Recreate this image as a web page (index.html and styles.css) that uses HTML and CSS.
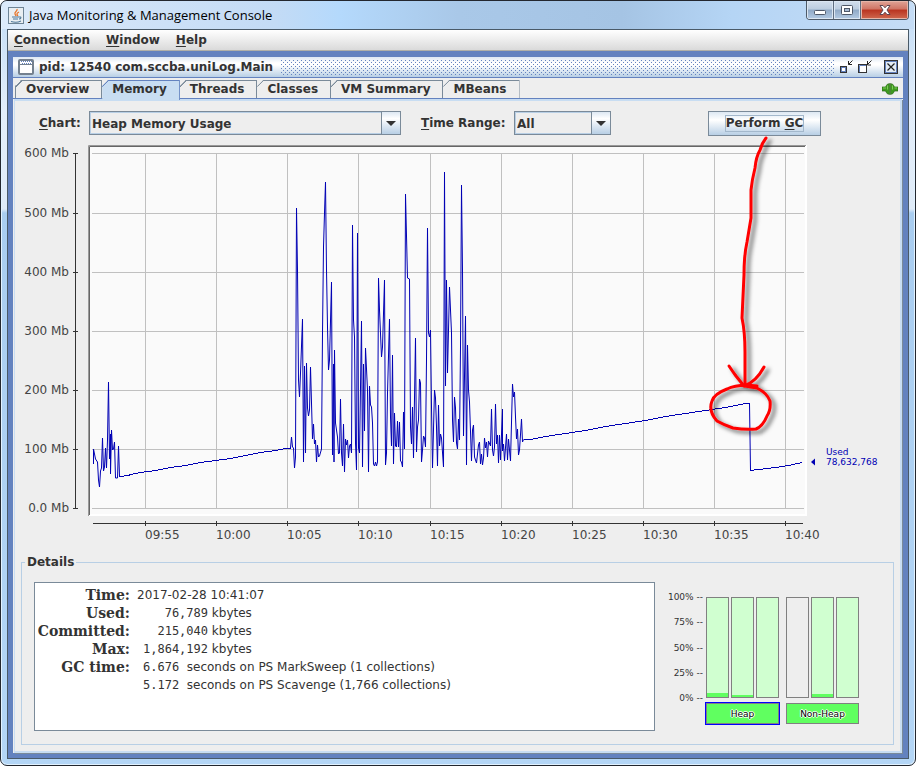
FILE: index.html
```
<!DOCTYPE html>
<html lang="en">

<head>
    <meta charset="UTF-8">
    <meta name="viewport" content="width=device-width, initial-scale=1.0">
    <title>Java Monitoring &amp; Management Console</title>
    <link rel="stylesheet" href="styles.css">
</head>

<body>
    <div class="window">
        <header class="titlebar">
            <svg class="java-icon" width="16" height="17" viewBox="0 0 16 17">
                <rect x="0.5" y="0.5" width="15" height="16" fill="#e9eef2" stroke="#6e8496" />
                <path d="M9 2c1 2-3 3-2 5l1 2M11 5c-2 1-3 2-1 4" fill="none" stroke="#e8762c" stroke-width="1.3" />
                <path d="M4 10h7M5 12h5M3 14.500c3 1 7 1 10-.5M11 10c3-.5 2 2 0 2" fill="none" stroke="#4f7899" stroke-width="1.1" />
            </svg>
            <h1>Java Monitoring &amp; Management Console</h1>
            <div class="window-buttons">
                <button type="button" class="win-btn" aria-label="Minimize">
                    <svg width="14" height="12" viewBox="0 0 14 12"><rect x="1.500" y="6.500" width="11" height="4" rx="1" fill="#fff" stroke="#4f5868" /></svg>
                </button>
                <button type="button" class="win-btn" aria-label="Maximize">
                    <svg width="14" height="12" viewBox="0 0 14 12"><rect x="1.500" y="1.500" width="11" height="9" rx="1" fill="#fff" stroke="#4f5868" /><rect x="4.500" y="4.500" width="5" height="3" fill="#a9bcd4" stroke="#4f5868" /></svg>
                </button>
                <button type="button" class="win-btn win-close" aria-label="Close">
                    <svg width="14" height="12" viewBox="0 0 14 12"><path d="M2 1.500h3l2 2.300 2-2.300h3L9 6l3 4.500H9L7 8.200 5 10.500H2L5 6z" fill="#fff" stroke="#5d4650" /></svg>
                </button>
            </div>
        </header>

        <div class="client">
            <nav class="menubar">
                <a href="#"><u>C</u>onnection</a>
                <a href="#"><u>W</u>indow</a>
                <a href="#"><u>H</u>elp</a>
            </nav>

            <main class="desktop">
                <section class="frame">
                    <div class="frame-title">
                        <svg width="16" height="16" viewBox="0 0 16 16">
                            <rect x="1" y="1" width="14" height="14" rx="1" fill="#fff" stroke="#74818f" stroke-width="2" />
                            <path d="M2 5.500h12" stroke="#74818f" />
                            <path d="M3 2.500h11M4 4.500h10" stroke="#6382bf" stroke-dasharray="1 1" />
                        </svg>
                        <h2>pid: 12540 com.sccba.uniLog.Main</h2>
                        <span class="bumps"></span>
                        <button type="button" class="frame-btn" aria-label="Iconify">
                            <svg width="14" height="16" viewBox="0 0 14 16">
                                <rect x="1.500" y="7.500" width="6" height="6" fill="#fff" stroke="#333" />
                                <rect x="2.500" y="8.500" width="4" height="4" fill="none" stroke="#6382bf" />
                                <path d="M13.500 1.500l-4 4M9.500 2v3.500H13" fill="none" stroke="#222" />
                            </svg>
                        </button>
                        <button type="button" class="frame-btn" aria-label="Maximize frame">
                            <svg width="15" height="16" viewBox="0 0 15 16">
                                <rect x="1.500" y="5.500" width="8" height="8" fill="#fff" stroke="#333" />
                                <path d="M2.500 13V6.500H9" fill="none" stroke="#6382bf" />
                                <path d="M14.500 1.500l-4 4M10.500 2v4H14" fill="none" stroke="#222" />
                            </svg>
                        </button>
                        <button type="button" class="frame-btn" aria-label="Close frame">
                            <svg width="14" height="16" viewBox="0 0 14 16">
                                <rect x="0.500" y="1.500" width="13" height="13" fill="#e4edf6" stroke="#333" />
                                <rect x="1.500" y="2.500" width="11" height="11" fill="none" stroke="#6382bf" />
                                <path d="M3.500 4.500l7 7M10.500 4.500l-7 7" stroke="#222" stroke-width="1.200" />
                            </svg>
                        </button>
                    </div>

                    <div class="tabs">
                        <button type="button" class="tab tab-first">Overview</button>
                        <button type="button" class="tab active">Memory</button>
                        <button type="button" class="tab">Threads</button>
                        <button type="button" class="tab">Classes</button>
                        <button type="button" class="tab">VM Summary</button>
                        <button type="button" class="tab">MBeans</button>
                        <svg class="plug" width="16" height="12" viewBox="0 0 16 12">
                            <path d="M0 4h3.500L5 1.500 7.500.5v11L5 10.500 3.500 8H0z" fill="#3e9a1e" stroke="#2b6b16" stroke-width=".7" />
                            <path d="M16 4h-3.500L11 1.500 8.500.5v11l2.500-1L12.500 8H16z" fill="#3e9a1e" stroke="#2b6b16" stroke-width=".7" />
                            <path d="M1 5h3M5.500 2.500v4M10.500 2.500v4M12.500 5H15" stroke="#7ecb5a" />
                        </svg>
                    </div>

                    <div class="panel">
                        <div class="toolbar">
                            <label class="chart-label" for="chart"><u>C</u>hart:</label>
                            <div class="combo combo-chart">
                                <select id="chart">
                                    <option>Heap Memory Usage</option>
                                    <option>Non-Heap Memory Usage</option>
                                </select>
                                <span class="combo-arrow"></span>
                            </div>
                            <label class="range-label" for="range"><u>T</u>ime Range:</label>
                            <div class="combo combo-range">
                                <select id="range">
                                    <option>All</option>
                                    <option>1 hour</option>
                                </select>
                                <span class="combo-arrow"></span>
                            </div>
                            <button type="button" class="gc-button"><span>Perform <u>G</u>C</span></button>
                        </div>

                        <svg class="plot" viewBox="15 136 885 412" role="img" aria-label="Heap memory usage over time">
                            <defs>
                                <filter id="shadow" x="-50%" y="-10%" width="220%" height="120%">
                                    <feDropShadow dx="4" dy="3" stdDeviation="2" flood-color="#000" flood-opacity="0.600" />
                                </filter>
                            </defs>

                            <rect x="88" y="145" width="719" height="371" fill="#fff" />
                            <rect x="90" y="147" width="715" height="367" fill="#fafafa" />
                            <path d="M88.500 516V145.500H806" fill="none" stroke="#999" />
                            <path d="M89.500 515V146.500H805" fill="none" stroke="#666" />

                            <path class="grid" d="M92 153.500H804M92 213.500H804M92 272.500H804M92 331.500H804M92 390.500H804M92 449.500H804M92 508.500H804" />
                            <path class="grid" d="M145.500 154V508M216.500 154V508M287.500 154V508M358.500 154V508M430.500 154V508M501.500 154V508M572.500 154V508M643.500 154V508M714.500 154V508M785.500 154V508" />

                            <path class="axis" d="M75.500 153V509M73 153.500h5M73 213.500h5M73 272.500h5M73 331.500h5M73 390.500h5M73 449.500h5M73 508.500h5" />
                            <path class="axis" d="M93 523.500H803M145.500 521v5M216.500 521v5M287.500 521v5M358.500 521v5M430.500 521v5M501.500 521v5M572.500 521v5M643.500 521v5M714.500 521v5M785.500 521v5" />

                            <g class="tick" text-anchor="end">
                                <text x="69" y="157">600 Mb</text>
                                <text x="69" y="217">500 Mb</text>
                                <text x="69" y="276">400 Mb</text>
                                <text x="69" y="335">300 Mb</text>
                                <text x="69" y="394">200 Mb</text>
                                <text x="69" y="453">100 Mb</text>
                                <text x="69" y="512">0.0 Mb</text>
                            </g>
                            <g class="tick">
                                <text x="145" y="539">09:55</text>
                                <text x="216" y="539">10:00</text>
                                <text x="287" y="539">10:05</text>
                                <text x="358" y="539">10:10</text>
                                <text x="430" y="539">10:15</text>
                                <text x="501" y="539">10:20</text>
                                <text x="572" y="539">10:25</text>
                                <text x="643" y="539">10:30</text>
                                <text x="714" y="539">10:35</text>
                                <text x="785" y="539">10:40</text>
                            </g>

                            <polyline class="series" points="93.5,464 93.5,449 95.5,459 97.5,462 98.5,480 99.5,487 100.5,471 101.5,468 102.5,438 103.5,471 104.5,467 105.5,448 106.5,468 107.5,440 108.5,382 109.5,459 110.5,434 110.5,474 111.5,430 112.5,450 113.5,449 114.5,442 115.5,478 117.5,478 118.5,446 119.5,476" />
                            <polyline class="series steps" points="119.5,476.500 128.5,475.500 130.5,474.500 140.5,472.500 155.5,470.500 170.5,467.500 185.5,465.500 200.5,462.500 215.5,460.500 230.5,458.500 245.5,455.500 260.5,452.500 275.5,450.500 285.5,448.500 290.5,448.500" />
                            <polyline class="series" points="290.5,448 291.5,437 292.5,447 293.5,448 294.5,468 295.5,457 296.5,208 297.5,270 298.5,380 299.5,397 300.5,373 302.5,319 303.5,462 304.5,366 305.5,453 306.5,363 307.5,408 308.5,416 309.5,410 310.5,367 312.5,439 313.5,424 314.5,444 315.5,440 316.5,462 317.5,445 318.5,457 319.5,456 321.5,449 322.5,333 323.5,247 324.5,213 325.5,182 326.5,270 327.5,327 328.5,370 329.5,360 331.5,282 332.5,455 333.5,364 334,462 334.5,350 335.5,423 337.5,437 338.5,454 339.5,453 340.5,399 341.5,453 342.5,466 343.5,424 344.5,472 345.5,439 346.5,445 347.5,440 348.5,458 349.5,446 350.5,444 351.5,453 352.5,225 353.5,320 354.5,337 355.5,443 356.5,470 357.5,233 358.5,448 359.5,453 361.5,321 362.5,467 363.5,364 364.5,431 365.5,348 367.5,390 368.5,472 369.5,386 370.5,405 371.5,407 372.5,423 373.5,464 374.5,466 375.5,462 376.5,466 377.5,462 378.5,278 379.5,310 381.5,357 382.5,347 384.5,280 385.5,465 386.5,453 387.5,393 389.5,319 390.5,417 391.5,446 392.5,355 393.5,464 394.5,413 395.5,446 396.5,447 397.5,421 398.5,447 399.5,422 400.5,461 401.5,462 402.5,467 403.5,412 404.5,449 405.5,194
                                407.5,278 409.5,279 410.5,427 411.5,444 412.5,407 413.5,458 415.5,338 416.5,452 417.5,427 418.5,420 419.5,379 420.5,383 421.5,462 422.5,450 423.5,436 424.5,438 425.5,447 426.5,360 427.5,228 428.5,333 429.5,337 430.5,330 431.5,407 432.5,468 434.5,390 435.5,398 436.5,427 437.5,466 438.5,405 439.5,446 440.5,434 441.5,438 443.5,467 444.5,172 445.5,386 446.5,280 447.5,373 449.5,287 451.5,333 452.5,420 453.5,442 454.5,397 455.5,408 456.5,443 457.5,449 458.5,419 459.5,440 460.5,347 461.5,185 462.5,270 463.5,436 465.5,316 466.5,465 467.5,345 468.5,390 469.5,402 471.5,461 472.5,430 473.5,425 474.5,457 476.5,463 478.5,445 479.5,442 480.5,464 481.5,454 482.5,465 483.5,458 484.5,438 485.5,448 486.5,442 487.5,457 488.5,441 490.5,446 491.5,409 492.5,450 493.5,456 494.5,447 495.5,404 496.5,444 497.5,435 498.5,463 499.5,435 500.5,460 502.5,409 502.5,451 503.5,444 504.5,461 506.5,434 507.5,460 508.5,439 510.5,461 512.5,384 513.5,397 514.5,392 515.5,417 516.5,439 517.5,429 518.5,455 519.5,450 521.5,419 522.5,442 523.5,439.500" />
                            <polyline class="series steps" points="523.5,439.500 530.5,439.500 545.5,436.500 565.5,433.500 585.5,430.500 605.5,426.500 625.5,423.500 645.5,420.500 665.5,416.500 685.5,413.500 705.5,410.500 725.5,407.500 745.5,403.500 749.5,403.500" />
                            <polyline class="series" points="749.5,403.500 750.5,470.500" />
                            <polyline class="series steps" points="750.5,470.500 758.5,469.500 775.5,467.500 788.5,465.500 802,462.500" />
                            <path d="M815 458.500v7l-4-3.500z" fill="#0000b4" />
                            <g class="used">
                                <text x="826" y="455">Used</text>
                                <text x="826" y="465">78,632,768</text>
                            </g>

                            <g class="marker" filter="url(#shadow)">
                                <path d="M766 138Q762 143 760 150Q756 157 755 168Q752 180 751 190V218L747 242Q744 255 744 275L742 318Q745 332 745 352V385" />
                                <path d="M729 366Q733 372 736 376L744 386Q756 382 764 367" />
                                <path d="M757 386C741 384 733 386 727 389Q714 394 712 401Q708 411 717 421Q724 425 733 428Q746 430 756 429Q763 426 767 416Q771 410 770 401Q767 393 757 388L745 386" />
                            </g>
                        </svg>

                        <fieldset class="details">
                            <legend>Details</legend>
                            <div class="details-body">
                                <div class="stats">
                                    <table>
                                        <tr><th scope="row">Time:</th><td>2017-02-28 10:41:07</td></tr>
                                        <tr><th scope="row">Used:</th><td><code>   76,789</code> kbytes</td></tr>
                                        <tr><th scope="row">Committed:</th><td><code>  215,040</code> kbytes</td></tr>
                                        <tr><th scope="row">Max:</th><td><code>1,864,192</code> kbytes</td></tr>
                                        <tr><th scope="row">GC time:</th><td><code>6.676</code>&nbsp; seconds on PS MarkSweep (1 collections)</td></tr>
                                        <tr><th scope="row"></th><td><code>5.172</code>&nbsp; seconds on PS Scavenge (1,766 collections)</td></tr>
                                    </table>
                                </div>
                                <div class="pools">
                                    <div class="scale">
                                        <span>100% --</span>
                                        <span>75% --</span>
                                        <span>50% --</span>
                                        <span>25% --</span>
                                        <span>0% --</span>
                                    </div>
                                    <div class="pool">
                                        <div class="bars">
                                            <div class="bar"><div class="fill" style="height: 4%"></div></div>
                                            <div class="bar"><div class="fill" style="height: 2%"></div></div>
                                            <div class="bar"></div>
                                        </div>
                                        <button type="button" class="pool-btn selected">Heap</button>
                                    </div>
                                    <div class="pool">
                                        <div class="bars">
                                            <div class="bar empty"></div>
                                            <div class="bar"><div class="fill" style="height: 3%"></div></div>
                                            <div class="bar"></div>
                                        </div>
                                        <button type="button" class="pool-btn">Non-Heap</button>
                                    </div>
                                </div>
                            </div>
                        </fieldset>
                    </div>
                </section>
            </main>
        </div>
    </div>
</body>

</html>
```
FILE: styles.css
```
* {
    box-sizing: border-box;
}

body {
    margin: 0;
    background: #fff;
    font-family: "DejaVu Sans", Verdana, sans-serif;
    font-size: 12px;
    color: #333;
}

button,
select {
    font: inherit;
    color: inherit;
    margin: 0;
    padding: 0;
    border: 0;
    border-radius: 0;
    background: none;
}

svg {
    display: block;
}

.window {
    display: flex;
    flex-direction: column;
    min-height: 100vh;
    padding: 0 6px 6px;
    border: 1px solid #23272f;
    border-radius: 7px;
    background: linear-gradient(#c2dcf6, #e3eefa 110px, #dfebf8 208px, #a9cdf0 212px, #b4d6f6);
    box-shadow: inset 0 0 0 1px #e2f2ff;
}

/* outer window title bar */
.titlebar {
    display: flex;
    align-items: flex-start;
    height: 28px;
    margin: 0 -5px;
    padding-left: 6px;
    border-radius: 6px 6px 0 0;
    background: linear-gradient(90deg, #dceafa, #c3dbf5 30%, #b4d9fc 37%, #a9c8e8 50%, #a5c4e4 68%, #b5d5f5 80%, #c5dcf5);
}

.java-icon {
    margin-top: 6px;
}

.titlebar h1 {
    flex: 1;
    margin: 0;
    padding: 5px 0 0 5px;
    font: 13px/18px "Open Sans", "Segoe UI", sans-serif;
    color: #000;
}

.window-buttons {
    display: flex;
    margin-right: 5px;
    border: 1px solid #4e5a68;
    border-top: 0;
    border-radius: 0 0 4px 4px;
    overflow: hidden;
}

.win-btn {
    display: flex;
    align-items: center;
    justify-content: center;
    width: 27px;
    height: 18px;
    border-right: 1px solid #5f6d80;
    background: linear-gradient(#d3dfed, #bccde0 45%, #90a9c6 50%, #b4cbe4);
    box-shadow: inset 0 0 0 1px #dbe6f2;
}

.win-close {
    width: 47px;
    border-right: 0;
    background: linear-gradient(#e0a497, #cf7464 45%, #b93420 50%, #d0694f);
    box-shadow: inset 0 0 0 1px #e5b5a8;
}

.client {
    display: flex;
    flex: 1;
    flex-direction: column;
    border: 1px solid #4a5a68;
}

.menubar {
    display: flex;
    gap: 16px;
    height: 21px;
    padding-left: 6px;
    border-bottom: 1px solid #b0b0a8;
    background: linear-gradient(#fff, #dadada);
    font-weight: bold;
    line-height: 20px;
}

.menubar a {
    color: inherit;
    text-decoration: none;
}

u {
    text-underline-offset: 2px;
}

.desktop {
    display: flex;
    flex: 1;
    padding: 6px 5px 5px;
    background: #6382bf;
}

/* internal frame */
.frame {
    display: flex;
    flex: 1;
    flex-direction: column;
    min-width: 0;
    background: #eee;
}

.frame-title {
    display: flex;
    align-items: center;
    height: 21px;
    padding: 0 5px;
    border-bottom: 1px solid #6382bf;
    background: linear-gradient(#dde8f3, #fff 30%, #fff 40%, #b8cfe5);
}

.frame-title h2 {
    margin: 0 8px 0 5px;
    font-size: 12px;
    line-height: 20px;
}

/* 1px dots in a staggered 4px grid */
.bumps {
    flex: 1;
    height: 15px;
    margin-right: 5px;
    background-image: conic-gradient(at 1px 1px, transparent 270deg, #6382bf 0), conic-gradient(at 1px 1px, transparent 270deg, #6382bf 0);
    background-position: 0 0, 2px 2px;
    background-size: 4px 4px;
}

.frame-btn + .frame-btn {
    margin-left: 4px;
}

.frame-btn:last-child {
    margin-left: 12px;
}

.tabs {
    display: flex;
    align-items: flex-end;
    height: 21px;
    padding: 0 5px 0 2px;
    border-bottom: 1px solid #6382bf;
}

.tab {
    height: 18px;
    padding: 0 12px 0 10px;
    border-right: 1px solid #7a8a99;
    background: linear-gradient(135deg, transparent 4px, #7a8a99 4px, #7a8a99 5px, transparent 5px) 0 0 / 8px 8px no-repeat, linear-gradient(#7a8a99, #7a8a99) 0 0 / 100% 1px no-repeat, #eee;
    clip-path: polygon(6px 0, 100% 0, 100% 100%, 0 100%, 0 6px);
    font-weight: bold;
    line-height: 19px;
}

.tab.tab-first {
    border-left: 1px solid #7a8a99;
}

.tab.active {
    height: 20px;
    margin-bottom: -2px;
    padding-bottom: 2px;
    border-color: #6382bf;
    background: linear-gradient(135deg, transparent 4px, #6382bf 4px, #6382bf 5px, transparent 5px) 0 0 / 8px 8px no-repeat, linear-gradient(#6382bf, #6382bf) 0 0 / 100% 1px no-repeat, #c8ddf2;
}

.plug {
    margin: 0 0 3px auto;
}

.panel {
    flex: 1;
    margin: 0 1px;
    border: 2px solid #c8ddf2;
    border-left-width: 1px;
    box-shadow: 1px 1px #7a8a99;
}

.toolbar {
    display: flex;
    align-items: flex-start;
    padding: 10px 79px 0 24px;
    font-weight: bold;
    line-height: 24px;
}

.chart-label {
    width: 50px;
}

.range-label {
    width: 93px;
    margin-left: 20px;
}

.combo {
    display: grid;
    height: 24px;
    border: 1px solid #7a8a99;
    box-shadow: inset 0 0 0 1px #b8cfe5;
}

.combo select,
.combo-arrow {
    grid-area: 1 / 1;
    height: 22px;
}

.combo select {
    width: 100%;
    padding: 0 20px 0 2px;
    appearance: none;
}

.combo-chart {
    flex: 0 1 312px;
}

.combo-range {
    flex: 0 0 97px;
}

.combo-arrow {
    display: flex;
    align-items: center;
    justify-content: center;
    justify-self: end;
    width: 19px;
    border-left: 1px solid #7a8a99;
    background: linear-gradient(#dde8f3, #fff 30%, #b8cfe5);
    pointer-events: none;
}

.combo-arrow::before {
    content: "";
    border: 5px solid transparent;
    border-top-color: #333;
    border-bottom: 0;
}

.gc-button {
    width: 113px;
    height: 25px;
    margin-left: auto;
    border: 1px solid #7a8a99;
    background: linear-gradient(#dde8f3, #fff 35%, #b8cfe5);
    font-weight: bold;
    line-height: 15px;
}

.gc-button span {
    display: inline-block;
    border: 1px solid #a3b8cc;
}

/* memory plot */
.plot {
    width: 100%;
    height: auto;
}

.grid {
    fill: none;
    stroke: #c0c0c0;
}

.axis {
    fill: none;
    stroke: #333;
}

.tick {
    font-size: 12px;
    fill: #444;
}

.series {
    fill: none;
    stroke: #0000b4;
}

.steps {
    shape-rendering: crispEdges;
}

.used {
    font-size: 9px;
    fill: #0000b4;
}

.marker {
    fill: none;
    stroke: #f00;
    stroke-width: 3;
    stroke-linecap: round;
    stroke-linejoin: round;
}

/* details */
.details {
    margin: 7px 6px 5px;
    padding: 13px 34px 13px 12px;
    border: 1px solid #b8cfe5;
}

.details legend {
    margin-left: -9px;
    padding: 0 2px;
    font-weight: bold;
    line-height: 14px;
}

.details-body {
    display: flex;
    gap: 11px;
}

.stats {
    flex: 1;
    height: 149px;
    padding: 3px 2px;
    border: 1px solid #7a8a99;
    background: #fff;
}

.stats table {
    border-collapse: collapse;
}

.stats th,
.stats td {
    height: 18px;
    padding: 0;
    line-height: 18px;
    white-space: nowrap;
}

.stats th {
    width: 93px;
    font-family: "DejaVu Serif", serif;
    font-size: 14px;
    text-align: right;
}

.stats td {
    padding-left: 7px;
}

.stats code {
    padding-left: 6px;
    font-family: "DejaVu Sans Mono", monospace;
    font-size: 12px;
    white-space: pre;
}

.pools {
    display: flex;
    width: 193px;
    padding-top: 15px;
}

.scale {
    display: flex;
    flex-direction: column;
    justify-content: space-between;
    width: 37px;
    height: 113px;
    margin: -6px 3px 0 0;
    font-size: 9px;
    line-height: 12px;
    text-align: right;
    white-space: pre;
}

.pool + .pool {
    margin-left: 7px;
}

.bars {
    display: flex;
    gap: 2px;
    height: 101px;
    margin-bottom: 5px;
}

.bar {
    display: flex;
    align-items: flex-end;
    width: 23px;
    border: 1px solid #808080;
    background: #d0ffd0;
}

.bar.empty {
    background: #eee;
}

.fill {
    width: 100%;
    background: #60ff60;
}

.pool-btn {
    display: block;
    width: 73px;
    height: 21px;
    border: 1px solid #808080;
    background: #60ff60;
    color: #000;
    font-size: 9px;
    text-shadow: 1px 0 #fff, -1px 0 #fff, 0 1px #fff, 0 -1px #fff;
}

.pool-btn.selected {
    box-shadow: 0 0 0 1px #00f;
}
```
